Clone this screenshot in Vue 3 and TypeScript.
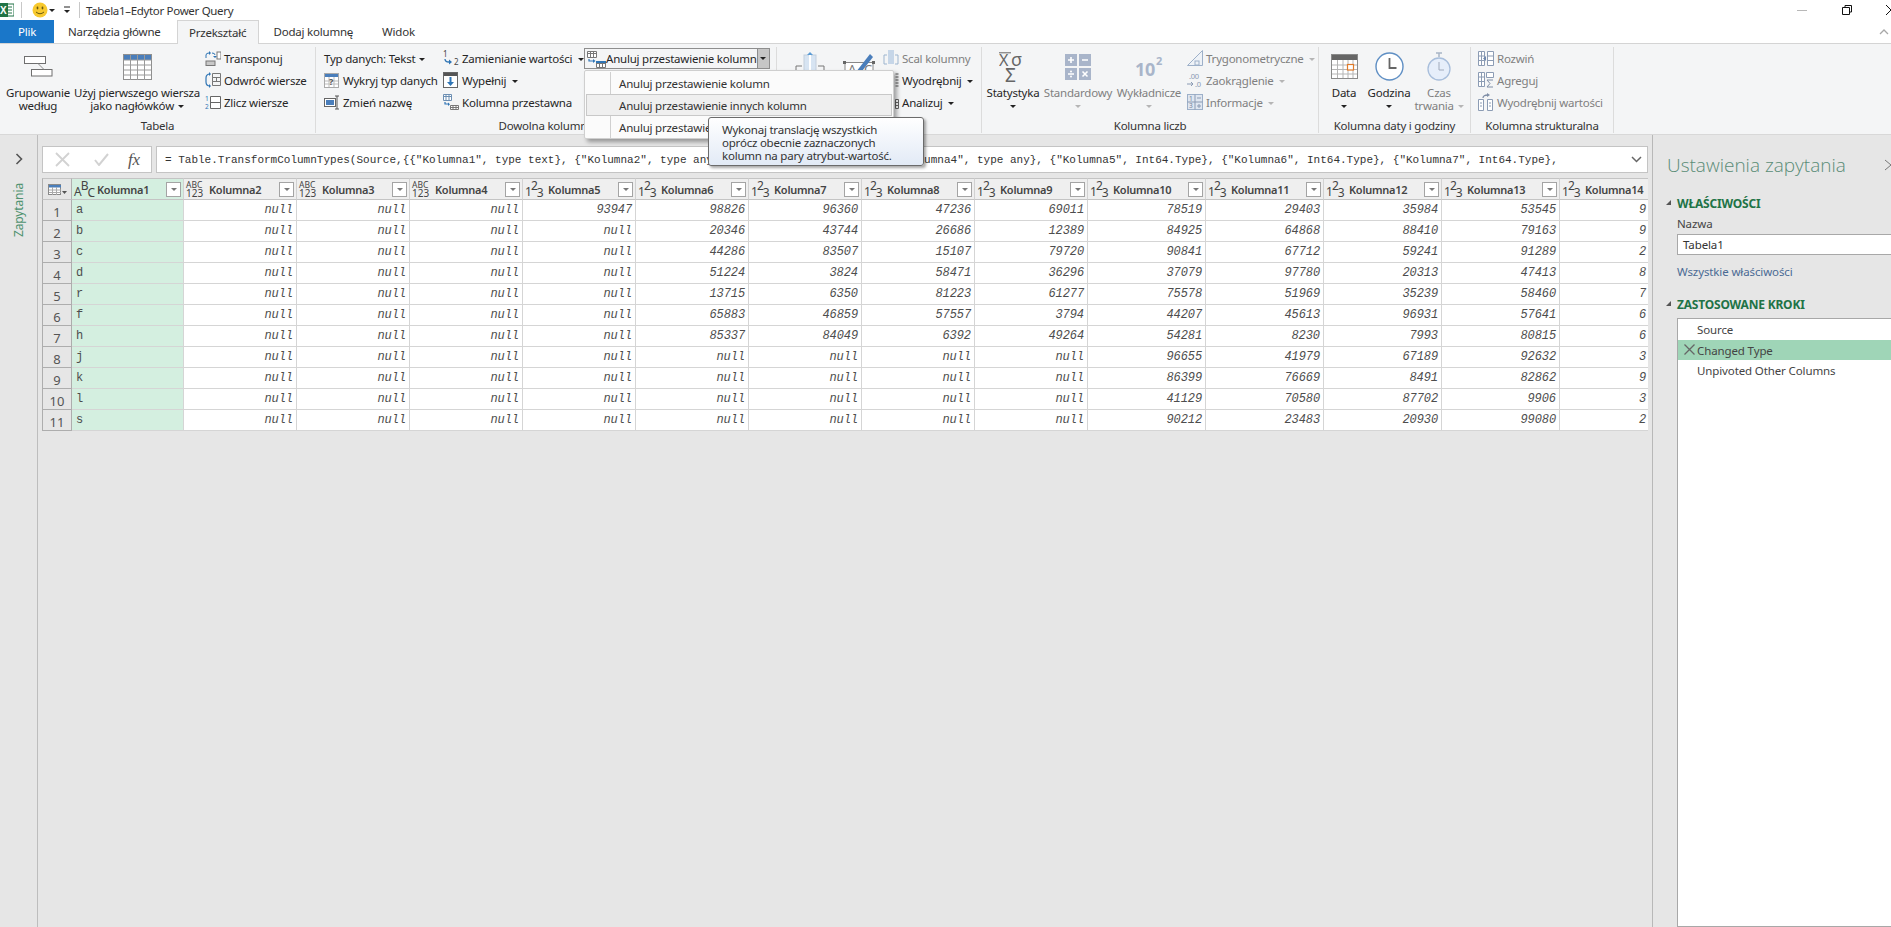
<script setup lang="ts">
interface Col { name: string; kind: 'abc' | 'num'; values: string[] }
const pad = (v: string[]): string[] => [...v, ...Array(11 - v.length).fill('null')]
const cols: Col[] = [
  { name: 'Kolumna2', kind: 'abc', values: pad([]) },
  { name: 'Kolumna3', kind: 'abc', values: pad([]) },
  { name: 'Kolumna4', kind: 'abc', values: pad([]) },
  { name: 'Kolumna5', kind: 'num', values: pad(['93947']) },
  { name: 'Kolumna6', kind: 'num', values: pad(['98826','20346','44286','51224','13715','65883','85337']) },
  { name: 'Kolumna7', kind: 'num', values: pad(['96360','43744','83507','3824','6350','46859','84049']) },
  { name: 'Kolumna8', kind: 'num', values: pad(['47236','26686','15107','58471','81223','57557','6392']) },
  { name: 'Kolumna9', kind: 'num', values: pad(['69011','12389','79720','36296','61277','3794','49264']) },
  { name: 'Kolumna10', kind: 'num', values: ['78519','84925','90841','37079','75578','44207','54281','96655','86399','41129','90212'] },
  { name: 'Kolumna11', kind: 'num', values: ['29403','64868','67712','97780','51969','45613','8230','41979','76669','70580','23483'] },
  { name: 'Kolumna12', kind: 'num', values: ['35984','88410','59241','20313','35239','96931','7993','67189','8491','87702','20930'] },
  { name: 'Kolumna13', kind: 'num', values: ['53545','79163','91289','47413','58460','57641','80815','92632','82862','9906','99080'] },
]
const first = ['a','b','c','d','r','f','h','j','k','l','s']
const last = ['9','9','2','8','7','6','6','3','9','3','2']
const formula = '= Table.TransformColumnTypes(Source,{{"Kolumna1", type text}, {"Kolumna2", type any}, {"Kolumna3", type any}, {"Kolumna4", type any}, {"Kolumna5", Int64.Type}, {"Kolumna6", Int64.Type}, {"Kolumna7", Int64.Type},'
</script>

<template>
  <div class="app">
    <div class="titlebar">
      <svg class="xl" width="14" height="14" viewBox="0 0 14 14"><rect x="5" y="1" width="9" height="12" fill="#fff" stroke="#217346"/><path d="M8 4h4M8 7h4M8 10h4" stroke="#217346"/><rect x="-2" y="0" width="10" height="14" fill="#217346"/><text x="0" y="11" font-size="10" font-weight="700" fill="#fff" font-family="Liberation Sans">X</text></svg>
      <i class="tsep t1"></i>
      <svg class="smile" width="16" height="16" viewBox="0 0 16 16"><circle cx="8" cy="8" r="7.5" fill="#f7c92e"/><ellipse cx="5.500" cy="6" rx=".9" ry="1.400" fill="#6b5a10"/><ellipse cx="10.500" cy="6" rx=".9" ry="1.400" fill="#6b5a10"/><path d="M4 10q4 3.500 8 0" fill="none" stroke="#6b5a10"/></svg>
      <span class="caret c-small"></span>
      <svg class="qat" width="8" height="8" viewBox="0 0 8 8"><path d="M1 1h6" stroke="#222"/><path d="M1 4h6L4 7z" fill="#222"/></svg>
      <i class="tsep t2"></i>
      <span class="title">Tabela1–Edytor Power Query</span>
      <span class="spacer"></span>
      <i class="min"></i>
      <svg class="restore" width="10" height="10" viewBox="0 0 10 10"><path d="M3 2V.5h6.500V7H8M.5 2.500h7v7h-7z" fill="none" stroke="#111"/></svg>
      <svg class="close" width="8" height="10" viewBox="0 0 8 10"><path d="M0 0l8 8M0 10l5-5" fill="none" stroke="#111"/></svg>
    </div>

    <div class="tabs">
      <span class="tab plik">Plik</span>
      <span class="tab t-nar">Narzędzia główne</span>
      <span class="tab active">Przekształć</span>
      <span class="tab t-dod">Dodaj kolumnę</span>
      <span class="tab t-wid">Widok</span>
      <span class="spacer"></span>
      <svg class="collapse" width="10" height="6" viewBox="0 0 10 6"><path d="M1 5l4-4 4 4" fill="none" stroke="#a8a8a8" stroke-width="1.300"/></svg>
    </div>

    <div class="ribbon">
      <section class="group g1">
        <div class="gbody">
          <div class="big w-grp">
            <div class="bigicon">
              <svg width="29" height="21" viewBox="0 0 29 21"><rect x=".5" y=".5" width="21" height="7" fill="#fff" stroke="#6f6f6f"/><rect x="7.500" y="13.500" width="20.500" height="6.500" fill="#fff" stroke="#6f6f6f"/><path d="M14 7.500l6 6" stroke="#8a8a8a"/></svg>
            </div>
            <div class="bigtext">Grupowanie<br>według</div>
          </div>
          <div class="big w-hdr">
            <div class="bigicon">
              <svg width="29" height="26" viewBox="0 0 29 26"><rect x=".5" y=".5" width="28" height="25" fill="#fff" stroke="#8f8f8f"/><rect x="1" y="1" width="27" height="5" fill="#4a7ebb"/><path d="M.5 6h28M.5 11h28M.5 16h28M.5 21h28M7.500 1v25M14.500 1v25M21.500 1v25" stroke="#9a9a9a" fill="none"/></svg>
            </div>
            <div class="bigtext">Użyj pierwszego wiersza<br>jako nagłówków <span class="caret"></span></div>
          </div>
          <div class="col c-tab">
            <div class="row">
              <svg class="ic" width="16" height="15" viewBox="0 0 16 15"><path d="M1 7V4q0-2 3-2M7 2q3 0 3 2" fill="none" stroke="#2f75b5"/><path d="M4 0v4l2-2zM8 5l2 2 2-2" fill="#2f75b5"/><rect x="12" y="1" width="4" height="7" fill="#fff" stroke="#777"/><rect x="1" y="10" width="9" height="4.500" fill="#c8c8c8" stroke="#777"/></svg>
              <span>Transponuj</span>
            </div>
            <div class="row">
              <svg class="ic" width="16" height="16" viewBox="0 0 16 16"><path d="M5 2Q1 2 1 6v4q0 4 4 4" fill="none" stroke="#2f75b5" stroke-width="1.200"/><path d="M4 0v4l2-2zM4 12v4l2-2z" fill="#2f75b5"/><path d="M7.500 1.500h8v4h-8zM7.500 5.500h8v4h-8zM7.500 9.500h8v4h-8zM11.500 5.500v4" fill="none" stroke="#777"/></svg>
              <span>Odwróć wiersze</span>
            </div>
            <div class="row">
              <svg class="ic" width="16" height="15" viewBox="0 0 16 15"><text x="0" y="6" font-size="6.500" fill="#2f75b5" font-family="Noto Sans">1</text><text x="0" y="14" font-size="6.500" fill="#2f75b5" font-family="Noto Sans">2</text><path d="M5.500 1.500h10v12h-10zM5.500 7.500h10" fill="#fff" stroke="#666"/></svg>
              <span>Zlicz wiersze</span>
            </div>
          </div>
        </div>
        <div class="glabel">Tabela</div>
      </section>

      <section class="group g2">
        <div class="gbody pl8">
          <div class="col w119">
            <div class="row"><span>Typ danych: Tekst <span class="caret"></span></span></div>
            <div class="row">
              <svg class="ic" width="16" height="15" viewBox="0 0 16 15"><rect x=".5" y=".5" width="14" height="14" fill="#fff" stroke="#aaa"/><rect x="1" y="1" width="13" height="3" fill="#4a7ebb"/><path d="M5 4v10M10 4v10M1 8h13M1 11h13" stroke="#bbb"/><text x="5" y="12" font-size="9" font-weight="700" fill="#555" font-family="Noto Sans">?</text></svg>
              <span>Wykryj typ danych</span>
            </div>
            <div class="row">
              <svg class="ic" width="16" height="15" viewBox="0 0 16 15"><rect x=".5" y="3.500" width="11" height="8" fill="#fff" stroke="#666"/><rect x="2" y="5" width="8" height="5" fill="#4a7ebb"/><path d="M13 1v13M11 1h4M11 14h4" stroke="#555" fill="none"/></svg>
              <span>Zmień nazwę</span>
            </div>
          </div>
          <div class="col w141">
            <div class="row">
              <svg class="ic" width="16" height="16" viewBox="0 0 16 16"><text x="0" y="7" font-size="8" fill="#444" font-family="Noto Sans">1</text><text x="11" y="15" font-size="8" fill="#444" font-family="Noto Sans">2</text><path d="M2 9q0 3 4 3" fill="none" stroke="#2f75b5" stroke-width="1.300"/><path d="M6 9.500v5l3-2.500z" fill="#2f75b5"/></svg>
              <span>Zamienianie wartości <span class="caret cl"></span></span>
            </div>
            <div class="row">
              <svg class="ic" width="16" height="16" viewBox="0 0 16 16"><rect x=".5" y=".5" width="14" height="15" fill="#fff" stroke="#666"/><rect x="1" y="1" width="13" height="3" fill="#555"/><path d="M7.500 5v6" stroke="#2f75b5" stroke-width="2"/><path d="M4 10h7l-3.500 4z" fill="#2f75b5"/></svg>
              <span>Wypełnij <span class="caret cl"></span></span>
            </div>
            <div class="row">
              <svg class="ic" width="16" height="16" viewBox="0 0 16 16"><path d="M.5.500h8v6h-8zM.5 2.500h8M3 .5v6M6 .5v6" fill="#fff" stroke="#6d8fb3"/><path d="M2 8v2h4" fill="none" stroke="#2f75b5" stroke-width="1.200"/><path d="M5 8.500v3.500l2-1.700z" fill="#2f75b5"/><path d="M7.500 11.500h8v4h-8zM7.500 13.500h8M10 11.500v4M13 11.500v4" fill="#fff" stroke="#777"/></svg>
              <span>Kolumna przestawna</span>
            </div>
          </div>
          <div class="splitbtn">
            <svg class="ic" width="20" height="18" viewBox="0 0 20 18"><path d="M1.500 1.500h9v6h-9zM1.500 3.500h9M4.500 1.500v6M7.500 1.500v6" fill="#fff" stroke="#777"/><path d="M3 9v2h5" fill="none" stroke="#2f75b5" stroke-width="1.200"/><path d="M7 9v4l2.500-2z" fill="#2f75b5"/><path d="M10.500 11.500h9v6h-9zM10.500 13.500h9M13.500 11.500v6M16.500 11.500v6" fill="#fff" stroke="#777"/><rect x="10" y="11" width="10" height="2" fill="#2f75b5"/></svg>
            <span class="splittext">Anuluj przestawienie kolumn</span>
            <span class="splitarrow"><span class="caret"></span></span>
          </div>
        </div>
        <div class="glabel">Dowolna kolumna</div>
      </section>

      <section class="group g3">
        <div class="gbody">
          <svg class="txt1" width="30" height="28" viewBox="0 0 30 28"><rect x="9" y="3" width="12" height="24" fill="#d7e4f2" stroke="#c4cfdc"/><path d="M15 3v24" stroke="#fff" stroke-width="2"/><path d="M12 3h6l-3-3z" fill="#5b9bd5"/><path d="M1 20v-6h6M23 14h6v6" fill="none" stroke="#777"/></svg>
          <svg class="txt2" width="32" height="28" viewBox="0 0 32 28"><path d="M2 10.500h28v17H2z" fill="#fff" stroke="#888"/><rect x="0" y="9" width="3" height="3" fill="#666"/><rect x="29" y="9" width="3" height="3" fill="#666"/><text x="5" y="22" font-size="13" fill="#777" font-family="Noto Sans">A</text><text x="21" y="22" font-size="13" fill="#777" font-family="Noto Sans">C</text><path d="M13 20L27 2l3 3-14 18z" fill="#4a7ebb"/></svg>
          <div class="col c-txt">
            <div class="row dis">
              <svg class="ic" width="16" height="18" viewBox="0 0 16 18"><path d="M1 6h3M1 6v9h3M15 6h-3M15 6v9h-3" fill="none" stroke="#9db5cf"/><rect x="5" y="1" width="6" height="14" fill="#c6d6e8"/></svg>
              <span>Scal kolumny</span>
            </div>
            <div class="row">
              <svg class="ic" width="16" height="16" viewBox="0 0 16 16"><path d="M12.500 2h3M12.500 5h3M12.500 8h3M12.500 11h3M12.500 14h3" stroke="#555"/></svg>
              <span>Wyodrębnij <span class="caret cl"></span></span>
            </div>
            <div class="row">
              <svg class="ic" width="16" height="16" viewBox="0 0 16 16"><path d="M12.500 5.500h3v9h-3zM12.500 8.500h3M12.500 11.500h3" fill="#fff" stroke="#666"/></svg>
              <span>Analizuj <span class="caret cl"></span></span>
            </div>
          </div>
        </div>
        <div class="glabel">&nbsp;</div>
      </section>

      <section class="group g4">
        <div class="gbody">
          <div class="big w-sta">
            <div class="bigicon">
              <svg width="28" height="30" viewBox="0 0 28 30"><path d="M0 .8h12" stroke="#666"/><text x="0" y="14" font-size="16" fill="#666" font-family="Noto Sans">X</text><text x="12" y="14" font-size="18" fill="#666" font-family="Noto Sans">σ</text><text x="6" y="30" font-size="19" fill="#666" font-family="Noto Sans">Σ</text></svg>
            </div>
            <div class="bigtext">Statystyka<br><span class="caret"></span></div>
          </div>
          <div class="big w-std dis">
            <div class="bigicon">
              <svg width="26" height="26" viewBox="0 0 26 26"><g fill="#a9b5ca"><rect width="12" height="12"/><rect x="14" width="12" height="12"/><rect y="14" width="12" height="12"/><rect x="14" y="14" width="12" height="12"/></g><path d="M3 6h6M6 3v6M17 6h6M3 20h6M17.500 17.500l5 5M22.500 17.500l-5 5" stroke="#fff" stroke-width="1.600"/><circle cx="6" cy="17.500" r="1" fill="#fff"/><circle cx="6" cy="22.500" r="1" fill="#fff"/></svg>
            </div>
            <div class="bigtext">Standardowy<br><span class="caret grey"></span></div>
          </div>
          <div class="big w-wyk dis">
            <div class="bigicon">
              <svg width="28" height="24" viewBox="0 0 28 24"><text x="0" y="21" font-size="18" font-weight="700" fill="#a9b5ca" font-family="Noto Sans">10</text><text x="21" y="10" font-size="11" font-weight="700" fill="#a9b5ca" font-family="Noto Sans">2</text></svg>
            </div>
            <div class="bigtext">Wykładnicze<br><span class="caret grey"></span></div>
          </div>
          <div class="col c-trg dis">
            <div class="row gap3">
              <svg class="ic" width="16" height="16" viewBox="0 0 16 16"><path d="M.5 15.500L15.500.5v15z" fill="#eef2f7" stroke="#9db0c9"/><rect x="8" y="11" width="4" height="4" fill="none" stroke="#9db0c9"/></svg>
              <span>Trygonometryczne <span class="caret grey cl"></span></span>
            </div>
            <div class="row gap3">
              <svg class="ic" width="16" height="16" viewBox="0 0 16 16"><text x="2" y="7" font-size="7.500" fill="#8a9ab3" font-family="Noto Sans">.00</text><text x="8" y="15" font-size="7.500" fill="#8a9ab3" font-family="Noto Sans">.0</text><path d="M0 12h6M4 10l2 2-2 2" fill="none" stroke="#8a9ab3"/></svg>
              <span>Zaokrąglenie <span class="caret grey cl"></span></span>
            </div>
            <div class="row gap3">
              <svg class="ic" width="16" height="16" viewBox="0 0 16 16"><rect x=".5" y=".5" width="15" height="15" fill="#dfe6f0" stroke="#9db0c9"/><path d="M8 .5v15M.5 8h15M10 4h4M10 12h4M12 10v4" stroke="#8a9ab3" fill="none"/><text x="2" y="7" font-size="6.500" fill="#6f7f98" font-family="Noto Sans">1</text><text x="2" y="14" font-size="6.500" fill="#6f7f98" font-family="Noto Sans">3</text></svg>
              <span>Informacje <span class="caret grey cl"></span></span>
            </div>
          </div>
        </div>
        <div class="glabel">Kolumna liczb</div>
      </section>

      <section class="group g5">
        <div class="gbody">
          <div class="big w-dat">
            <div class="bigicon">
              <svg width="27" height="25" viewBox="0 0 27 25"><rect x=".5" y=".5" width="26" height="24" fill="#fff" stroke="#8a8a8a"/><rect x="1" y="1" width="25" height="5" fill="#666"/><path d="M1 11h25M1 15.500h25M1 20h25M6.500 6v18M12 6v18M17 6v18M22 6v18" stroke="#b5b5b5"/><rect x="16.500" y="10.500" width="6" height="5.500" fill="#fff" stroke="#e07b2a" stroke-width="1.200"/></svg>
            </div>
            <div class="bigtext">Data<br><span class="caret"></span></div>
          </div>
          <div class="big w-god">
            <div class="bigicon">
              <svg width="29" height="29" viewBox="0 0 29 29"><circle cx="14.500" cy="14.500" r="13.500" fill="#fff" stroke="#5f8fc4" stroke-width="1.400"/><path d="M14.500 6v10h7" fill="none" stroke="#666" stroke-width="1.800"/></svg>
            </div>
            <div class="bigtext">Godzina<br><span class="caret"></span></div>
          </div>
          <div class="big w-cza dis">
            <div class="bigicon">
              <svg width="24" height="30" viewBox="0 0 24 30"><path d="M9 1h6M12 1v4" stroke="#a8b5c6" stroke-width="1.500"/><circle cx="12" cy="17" r="11" fill="#e6eefa" stroke="#a8bedb" stroke-width="1.300"/><path d="M12 10v8h5" fill="none" stroke="#a0aabb"/></svg>
            </div>
            <div class="bigtext">Czas<br>trwania <span class="caret grey"></span></div>
          </div>
        </div>
        <div class="glabel">Kolumna daty i godziny</div>
      </section>

      <section class="group g6">
        <div class="gbody">
          <div class="col c-str dis">
            <div class="row gap3">
              <svg class="ic" width="16" height="15" viewBox="0 0 16 15"><path d="M.5.500h6v14h-6zM.5 5h6M.5 9.500h6M3.500.5v14M9.500.5h6v14h-6zM9.500 5h6M9.500 9.500h6" fill="#fff" stroke="#8c9cb4"/><path d="M8 5l-3 2.500L8 10z" fill="#6f88ad"/></svg>
              <span>Rozwiń</span>
            </div>
            <div class="row gap3">
              <svg class="ic" width="16" height="16" viewBox="0 0 16 16"><path d="M.5.500h6v14h-6zM.5 5h6M.5 9.500h6M3.500.5v14M8.500.5h7v5h-7z" fill="#fff" stroke="#8c9cb4"/><path d="M15 8H9l3 3.500L9 15h6" fill="none" stroke="#7f8ea6"/></svg>
              <span>Agreguj</span>
            </div>
            <div class="row gap3">
              <svg class="ic" width="16" height="18" viewBox="0 0 16 18"><path d="M.5 6.500h5v11h-5zM9.500 6.500h5v11h-5zM2 10h2M2 13h2M11 10h2M11 13h2" fill="#fff" stroke="#8c9cb4"/><path d="M5 5q0-3 5-3" fill="none" stroke="#7f8ea6" stroke-width="1.300"/><path d="M9 0v4l3-2z" fill="#7f8ea6"/></svg>
              <span>Wyodrębnij wartości</span>
            </div>
          </div>
        </div>
        <div class="glabel">Kolumna strukturalna</div>
      </section>
    </div>

    <div class="body">
      <aside class="side">
        <svg width="8" height="12" viewBox="0 0 8 12"><path d="M1.500 1l5 5-5 5" fill="none" stroke="#555" stroke-width="1.600"/></svg>
        <span class="vert">Zapytania</span>
      </aside>

      <main class="center">
        <div class="fbar">
          <div class="fbtns">
            <svg width="15" height="15" viewBox="0 0 15 15"><path d="M1 1l13 13M14 1L1 14" stroke="#d2d2d2" stroke-width="1.800"/></svg>
            <svg width="15" height="13" viewBox="0 0 15 13"><path d="M1 7l4 5 9-11" fill="none" stroke="#d2d2d2" stroke-width="2"/></svg>
            <span class="fx">fx</span>
          </div>
          <div class="formula">
            <span class="ftext">{{ formula }}</span>
            <svg width="11" height="7" viewBox="0 0 11 7"><path d="M1 1l4.500 4.500L10 1" fill="none" stroke="#666" stroke-width="1.500"/></svg>
          </div>
        </div>

        <div class="tablewrap">
          <table>
            <colgroup>
              <col class="cw-h"><col class="cw-1">
              <col v-for="c in cols" :key="c.name" :class="c.name.length > 8 ? 'cw-l' : 'cw-m'">
              <col class="cw-z">
            </colgroup>
            <thead>
              <tr>
                <th class="corner">
                  <svg width="20" height="11" viewBox="0 0 20 11"><rect x=".5" y=".5" width="12" height="10" fill="#fff" stroke="#8a8a8a"/><rect x="1" y="1" width="12" height="2.500" fill="#4a7ebb"/><path d="M1 6h12M1 8.500h12M4.500 3v8M8.500 3v8" stroke="#aaa"/><path d="M14 7h5l-2.500 3z" fill="#555"/></svg>
                </th>
                <th class="selected">
                  <div class="hcell">
                    <span class="ty abcs"><span class="d1">A</span><span class="u1">B</span><span class="d2">C</span></span>
                    <span class="hname">Kolumna1</span>
                    <span class="filter"><i></i></span>
                  </div>
                </th>
                <th v-for="c in cols" :key="c.name">
                  <div class="hcell">
                    <span v-if="c.kind === 'abc'" class="ty any"><span>ABC</span><span class="n">123</span></span>
                    <span v-else class="ty abcs"><span class="d1">1</span><span class="u1">2</span><span class="d2">3</span></span>
                    <span class="hname">{{ c.name }}</span>
                    <span class="filter"><i></i></span>
                  </div>
                </th>
                <th class="lastc">
                  <div class="hcell">
                    <span class="ty abcs"><span class="d1">1</span><span class="u1">2</span><span class="d2">3</span></span>
                    <span class="hname">Kolumna14</span>
                  </div>
                </th>
              </tr>
            </thead>
            <tbody>
              <tr v-for="(f, i) in first" :key="f">
                <th class="rn">{{ i + 1 }}</th>
                <td class="selected txt">{{ f }}</td>
                <td v-for="c in cols" :key="c.name">{{ c.values[i] }}</td>
                <td class="lastc">{{ last[i] }}</td>
              </tr>
            </tbody>
          </table>
        </div>
      </main>

      <aside class="panel">
        <div class="ptitle">Ustawienia zapytania<svg class="pclose" width="9" height="12" viewBox="0 0 9 12"><path d="M1 1l6 5-6 5" fill="none" stroke="#777"/></svg></div>
        <div class="phead"><i class="tri"></i>WŁAŚCIWOŚCI</div>
        <div class="plabel">Nazwa</div>
        <div class="pinput">Tabela1</div>
        <div class="plink">Wszystkie właściwości</div>
        <div class="phead h2"><i class="tri"></i>ZASTOSOWANE KROKI</div>
        <div class="steps">
          <div class="step">Source</div>
          <div class="step on">
            <svg width="13" height="11" viewBox="0 0 13 11"><path d="M1.500.5l10 10M11.500.5l-10 10" stroke="#666" stroke-width="1.300"/></svg>
            Changed Type
          </div>
          <div class="step">Unpivoted Other Columns</div>
        </div>
      </aside>
    </div>

    <div class="menu">
      <div class="mitem"><i class="gut"></i><span>Anuluj przestawienie kolumn</span></div>
      <div class="mitem hi"><i class="gut"></i><span>Anuluj przestawienie innych kolumn</span></div>
      <div class="mitem"><i class="gut"></i><span>Anuluj przestawienie tylko zaznaczonych kolumn</span></div>
    </div>
    <div class="tooltip">Wykonaj translację wszystkich<br>oprócz obecnie zaznaczonych<br>kolumn na pary atrybut-wartość.</div>
  </div>
</template>

<style>
html, body { margin: 0; background: #fff; }
</style>

<style scoped>
.app { position: relative; width: 1891px; height: 927px; overflow: hidden; background: #fff; color: #262626; font-family: "Noto Sans", sans-serif; font-size: 11.5px; letter-spacing: -0.22px; }
.spacer { flex: 1; }

.titlebar { height: 20px; display: flex; align-items: center; }
.xl { margin-right: 7px; }
.tsep { width: 1px; height: 16px; background: #c8c8c8; }
.smile { margin-left: 10px; }
.c-small { margin-left: 4px; border-top-color: #777; }
.qat { margin-left: 8px; }
.t2 { margin-left: 8px; }
.title { margin-left: 6px; font-size: 11.5px; letter-spacing: -0.32px; color: #333; }
.min { width: 10px; height: 1px; background: #b8b8b8; margin-right: 35px; }
.restore { margin-right: 34px; }
.close { margin-right: -3px; flex: none; }

.tabs { height: 23px; display: flex; align-items: stretch; position: relative; z-index: 1; }
.tab { display: flex; align-items: center; line-height: 23px; color: #333; }
.plik { width: 54px; justify-content: center; background: #1a77c9; color: #fff; }
.t-nar { margin-left: 14px; }
.active { margin-left: 16px; width: 82px; justify-content: center; box-sizing: border-box; background: #f4f5f6; border: 1px solid #d4d4d4; border-bottom: none; height: 24px; }
.t-dod { margin-left: 15px; }
.t-wid { margin-left: 29px; }
.collapse { align-self: center; margin-right: 2px; }

.ribbon { display: flex; background: #f4f5f6; border-top: 1px solid #d4d4d4; border-bottom: 1px solid #d8d8d8; height: 90px; }
.group { box-sizing: border-box; margin-top: 3px; height: 86px; display: flex; flex-direction: column; border-right: 1px solid #dcdcdc; }
.g1 { width: 316px; }
.g2 { width: 461px; }
.g3 { width: 205px; }
.g4 { width: 337px; }
.g5 { width: 152px; }
.g6 { width: 143px; }
.gbody { flex: 1; display: flex; min-height: 0; }
.pl8 { padding-left: 8px; }
.glabel { height: 14px; line-height: 14px; text-align: center; color: #333; white-space: nowrap; }

.big { display: flex; flex-direction: column; align-items: center; flex: none; }
.bigicon { height: 39px; display: flex; align-items: center; justify-content: center; }
.bigtext { text-align: center; line-height: 13px; white-space: nowrap; }
.w-grp { width: 66px; margin-left: 5px; }
.w-hdr { width: 128px; margin-left: 2px; }
.c-tab { margin-left: 4px; }

.col { display: flex; flex-direction: column; flex: none; }
.row { height: 22px; display: flex; align-items: center; gap: 3px; white-space: nowrap; }
.ic { flex: none; width: 16px; }
.w119 { width: 119px; }
.w141 { width: 141px; }
.dis { color: #808080; }

.caret { display: inline-block; width: 0; height: 0; border-left: 3px solid transparent; border-right: 3px solid transparent; border-top: 3px solid #222; vertical-align: middle; margin-left: 1px; }
.caret.grey { border-top-color: #b5b5b5; }
.cl { margin-left: 3px; }

.splitbtn { box-sizing: border-box; width: 186px; height: 21px; margin-top: 1px; display: flex; align-items: center; border: 1px solid #8e8e8e; background: #f4f5f6; }
.splitbtn .ic { width: 20px; margin-left: 1px; }
.splittext { margin-left: 0; flex: 1; white-space: nowrap; }
.splitarrow { width: 12px; align-self: stretch; background: #c6c6c6; border-left: 1px solid #8e8e8e; display: flex; align-items: center; justify-content: center; }
.splitarrow .caret { margin: 0; }

.txt1 { margin: 5px 0 0 18px; }
.txt2 { margin: 5px 0 0 18px; }
.c-txt { margin-left: 8px; }

.w-sta { width: 60px; margin-left: 1px; }
.w-std { width: 72px; margin-left: -1px; }
.w-wyk { width: 66px; margin-left: 2px; }
.c-trg { margin-left: 5px; }
.gap3 { gap: 3px; }
.w-dat { width: 40px; margin-left: 5px; }
.w-god { width: 50px; margin-left: 0; }
.w-cza { width: 50px; margin-left: 0; }
.c-str { margin-left: 7px; }

.body { height: 792px; display: flex; background: #e6e6e6; }
.side { box-sizing: border-box; width: 38px; flex: none; border-right: 1px solid #bdbdbd; display: flex; flex-direction: column; align-items: center; padding-top: 18px; }
.vert { margin-top: 18px; writing-mode: vertical-rl; transform: rotate(180deg); color: #4f9270; font-size: 12px; line-height: 14px; letter-spacing: -0.12px; }

.center { width: 1614px; flex: none; box-sizing: border-box; padding: 11px 4px 0 4px; }
.fbar { display: flex; gap: 4px; height: 27px; }
.fbtns { box-sizing: border-box; width: 110px; flex: none; background: #fff; border: 1px solid #c4c4c4; display: flex; align-items: center; gap: 24px; padding-left: 12px; }
.fx { font-family: "Liberation Serif", serif; font-style: italic; font-size: 17px; color: #555; margin-left: -5px; }
.formula { box-sizing: border-box; flex: 1; min-width: 0; background: #fff; border: 1px solid #c4c4c4; display: flex; align-items: center; padding: 0 5px 0 8px; }
.ftext { flex: 1; min-width: 0; overflow: hidden; white-space: pre; font-family: "Liberation Mono", monospace; font-size: 11px; letter-spacing: 0; color: #333; }

.tablewrap { margin-top: 5px; width: 1606px; overflow: hidden; }
table { table-layout: fixed; border-collapse: separate; border-spacing: 0; width: 1606px; }
.cw-h { width: 30px; }
.cw-1 { width: 112px; }
.cw-m { width: 113px; }
.cw-l { width: 118px; }
.cw-z { width: 88px; }
thead th { box-sizing: border-box; height: 22px; padding: 0; background: #efefef; border-top: 1px solid #c4c4c4; border-bottom: 1px solid #c4c4c4; border-right: 1px solid #d2d2d2; font-weight: 400; }
thead th.corner { background: #e6e6e6; border-left: 1px solid #b0b0b0; border-right: 1px solid #b0b0b0; text-align: left; padding-left: 5px; line-height: 0; }
thead th.selected { background: #d4efe0; }
.hcell { display: flex; align-items: center; height: 20px; padding-left: 2px; }
.ty { width: 23px; flex: none; color: #444; display: block; text-align: left; }
.abcs { display: flex; align-items: flex-start; height: 20px; font-size: 12px; line-height: 12px; letter-spacing: 0; }
.abcs > span { margin-right: -1px; }
.abcs .d1 { margin-top: 7px; }
.abcs .u1 { margin-top: 1px; }
.abcs .d2 { margin-top: 8px; }
.any { font-size: 8.5px; line-height: 8px; letter-spacing: 0; display: flex; flex-direction: column; }
.any .n { font-size: 10px; line-height: 9px; }
.hname { flex: 1; font-weight: 600; font-size: 11px; color: #444; letter-spacing: -0.25px; text-align: left; white-space: nowrap; }
.filter { box-sizing: border-box; width: 15px; height: 15px; flex: none; margin-right: 2px; background: #fff; border: 1px solid #a4a4a4; display: flex; align-items: center; justify-content: center; }
.filter i { width: 0; height: 0; border-left: 3px solid transparent; border-right: 3px solid transparent; border-top: 3px solid #777; }
tbody th.rn { box-sizing: border-box; height: 21px; padding: 3px 0 0; background: #e6e6e6; border-left: 1px solid #adadad; border-right: 1px solid #adadad; border-bottom: 1px solid #adadad; font-weight: 400; font-size: 13px; line-height: 16px; color: #555; letter-spacing: 0; text-align: center; }
tbody td { box-sizing: border-box; height: 21px; padding: 0 3px 1px 0; background: #fff; border-right: 1px solid #d5d5d5; border-bottom: 1px solid #d5d5d5; text-align: right; font-family: "Liberation Mono", monospace; font-size: 12px; font-style: italic; letter-spacing: -0.08px; color: #4d4d4d; white-space: nowrap; overflow: hidden; }
tbody td.txt { background: #d4efe0; text-align: left; padding-left: 4px; font-style: normal; }
tbody td.lastc { border-right: none; padding-right: 2px; }
thead th.lastc { border-right: none; }

.panel { flex: 1; min-width: 0; overflow: hidden; box-sizing: border-box; border-left: 1px solid #b8b8b8; padding: 16px 0 0 24px; display: flex; flex-direction: column; letter-spacing: -0.12px; }
.ptitle { height: 28px; line-height: 28px; font-family: "Open Sans", "Noto Sans", sans-serif; font-weight: 300; font-size: 19px; letter-spacing: 0; color: #5a8c76; white-space: nowrap; margin-left: -10px; position: relative; }
.pclose { position: absolute; left: 217px; top: 8px; }
.phead { margin-top: 16px; height: 16px; line-height: 18px; font-weight: 700; font-size: 12px; letter-spacing: -0.2px; color: #217346; white-space: nowrap; position: relative; }
.h2 { margin-top: 17px; }
.tri { position: absolute; left: -11px; top: 5px; width: 0; height: 0; border-left: 5px solid transparent; border-bottom: 5px solid #555; }
.plabel { margin-top: 5px; height: 16px; line-height: 16px; color: #444; }
.pinput { box-sizing: border-box; margin-top: 2px; height: 21px; width: 260px; background: #fff; border: 1px solid #a8a8a8; padding-left: 5px; line-height: 19px; color: #333; flex: none; }
.plink { margin-top: 8px; height: 16px; line-height: 18px; color: #4a6a94; white-space: nowrap; }
.steps { box-sizing: border-box; margin-top: 6px; flex: 1; width: 260px; background: #fff; border: 1px solid #a8a8a8; }
.step { box-sizing: border-box; height: 20.500px; padding: 1px 0 0 19px; color: #444; display: flex; align-items: center; position: relative; white-space: nowrap; }
.step.on { background: #9fd5b7; }
.step svg { position: absolute; left: 5px; top: 4px; }

.menu { position: absolute; left: 584px; top: 70px; width: 310px; height: 69px; box-sizing: border-box; background: #fbfbfb; border: 1px solid #cfcfcf; padding: 1px; box-shadow: 3px 3px 4px rgba(0,0,0,.35); border-radius: 2px; }
.mitem { height: 22px; display: flex; align-items: center; box-sizing: border-box; white-space: nowrap; overflow: hidden; color: #333; }
.gut { width: 24px; height: 100%; border-right: 1px solid #d0d0d0; margin-right: 8px; flex: none; }
.hi { background: #efefef; border: 1px solid #c8c8c8; }
.hi .gut { border-right: none; }
.tooltip { position: absolute; left: 708px; top: 117px; width: 216px; height: 49px; box-sizing: border-box; border: 1px solid #6b6b6b; border-radius: 3px; padding: 5px 0 0 13px; line-height: 13px; color: #333; background: linear-gradient(#fff, #e2eaf6); box-shadow: 2px 2px 3px rgba(0,0,0,.35); white-space: nowrap; }
</style>
